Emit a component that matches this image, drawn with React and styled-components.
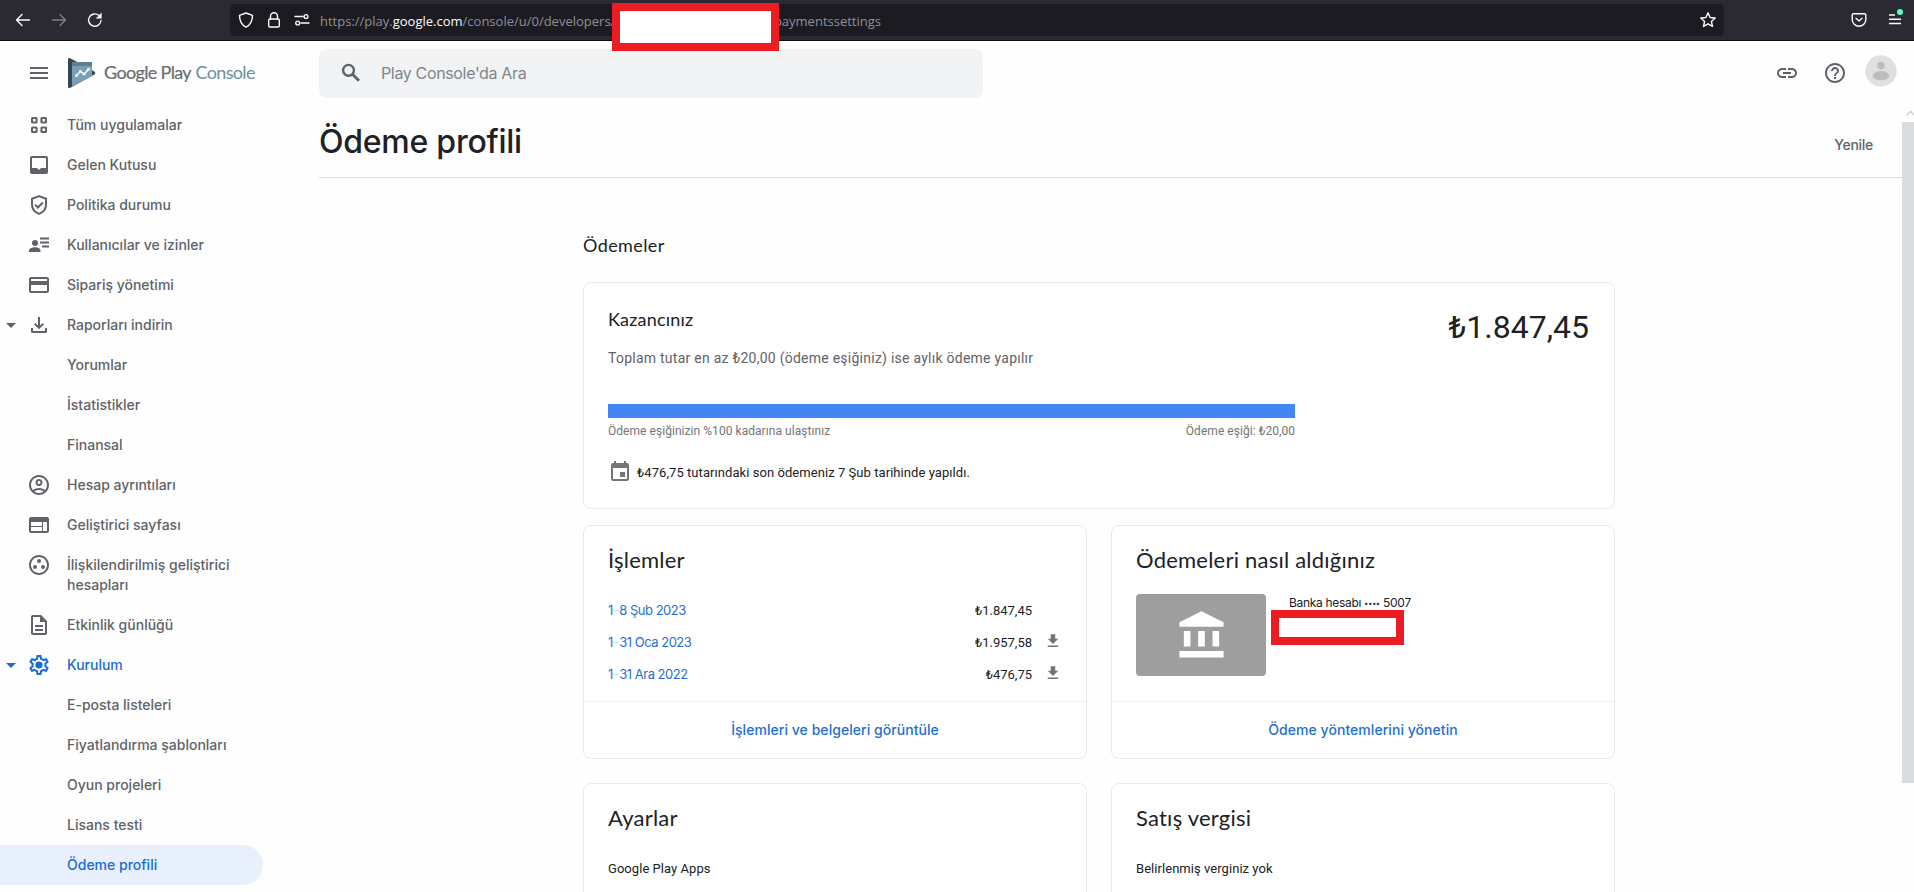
import styled, { createGlobalStyle } from "styled-components"
import {
  MdMenu, MdLink, MdHelpOutline, MdArrowDropDown, MdAccountBalance, MdEvent,
  MdFileDownload, MdOutlineGroupWork, MdOutlineAccountCircle, MdWeb, MdOutlineDescription, MdCreditCard,
} from "react-icons/md"

const GlobalStyle = createGlobalStyle`
*{ box-sizing:border-box; }
body{
margin:0;
background:#fefefe;
color:#202124;
font-family:Inter,"Liberation Sans",sans-serif;
overflow:hidden;
}
`

const SearchIcon = () => (
  <svg width="24" height="24" viewBox="0 0 24 24" fill="none" stroke="currentColor" strokeWidth="2.400">
    <circle cx="9.500" cy="9.300" r="5.400" />
    <path d="M13.400 13.200l6.600 6.600" strokeWidth="2.800" />
  </svg>
)
const GridIcon = () => (
  <svg width="24" height="24" viewBox="0 0 24 24" fill="none" stroke="currentColor" strokeWidth="2">
    <rect x="5" y="5" width="4.600" height="4.600" rx=".6" />
    <rect x="14.400" y="5" width="4.600" height="4.600" rx=".6" />
    <rect x="5" y="14.400" width="4.600" height="4.600" rx=".6" />
    <rect x="14.400" y="14.400" width="4.600" height="4.600" rx=".6" />
  </svg>
)
const InboxIcon = () => (
  <svg width="24" height="24" viewBox="0 0 24 24" fill="currentColor">
    <path d="M19 3H5a2 2 0 0 0-2 2v14c0 1.100.9 2 2 2h14a2 2 0 0 0 2-2V5a2 2 0 0 0-2-2zm0 12h-5l-2 2-2-2H5V5h14v10z" />
  </svg>
)
const ShieldIcon = () => (
  <svg width="24" height="24" viewBox="0 0 24 24" fill="none" stroke="currentColor" strokeWidth="2">
    <path d="M12 3.100 5 5.800v5.400c0 4.500 2.800 8 7 9.700 4.200-1.700 7-5.200 7-9.700V5.800z" />
    <path d="m8 11.600 2.900 2.900 5-5" />
  </svg>
)
const UsersIcon = () => (
  <svg width="24" height="24" viewBox="0 0 24 24" fill="currentColor">
    <circle cx="8" cy="10" r="3" />
    <path d="M2 19v-1.500C2 15.300 5.500 14.300 8 14.300s5.500 1 5.500 3.200V19zM13 4.500h9v2h-9zM13 8.500h9v2h-9zM15 12.500h7v2h-7z" />
  </svg>
)
const TrayIcon = () => (
  <svg width="24" height="24" viewBox="0 0 24 24" fill="none" stroke="currentColor" strokeWidth="2">
    <path d="M12 4v10.500M7.700 10.600l4.300 4.300 4.300-4.300M5 15v3.500c0 .3.200.5.500.5h13c.3 0 .5-.2.500-.5V15" />
  </svg>
)
const GearIcon = () => (
  <svg width="24" height="24" viewBox="0 0 24 24" fill="currentColor">
    <path d="M19.430 12.980c.04-.32.070-.64.070-.98 0-.34-.03-.66-.07-.98l2.110-1.650c.19-.15.240-.42.120-.64l-2-3.460a.5.5 0 0 0-.61-.22l-2.490 1c-.52-.4-1.080-.73-1.690-.98l-.38-2.650A.488.488 0 0 0 14 2h-4c-.25 0-.46.180-.49.420l-.38 2.650c-.61.250-1.170.590-1.690.980l-2.490-1a.5.5 0 0 0-.61.220l-2 3.460c-.13.220-.07.490.120.640l2.110 1.650c-.04.320-.07.650-.07.980s.03.660.070.980l-2.110 1.650c-.19.150-.24.420-.12.640l2 3.460a.5.5 0 0 0 .61.220l2.490-1c.52.400 1.080.730 1.690.980l.38 2.650c.03.240.240.420.490.420h4c.25 0 .46-.18.490-.42l.38-2.650c.61-.25 1.170-.59 1.690-.98l2.490 1a.5.5 0 0 0 .61-.22l2-3.460c.12-.22.070-.49-.12-.64l-2.110-1.650zm-1.980-1.710c.04.310.050.520.050.730s-.02.430-.05.730l-.14 1.130.89.700 1.080.840-.7 1.210-1.270-.51-1.040-.42-.9.680c-.43.320-.84.560-1.250.730l-1.060.430-.16 1.130-.2 1.350h-1.400l-.19-1.350-.16-1.130-1.060-.43c-.43-.18-.83-.41-1.230-.71l-.91-.7-1.060.430-1.270.510-.7-1.210 1.080-.84.890-.7-.14-1.130c-.03-.31-.05-.54-.05-.74s.02-.43.050-.73l.14-1.130-.89-.7-1.080-.84.700-1.210 1.270.510 1.040.420.900-.68c.43-.32.840-.56 1.250-.73l1.060-.43.160-1.130.2-1.350h1.390l.19 1.350.160 1.130 1.060.430c.43.180.830.410 1.230.710l.91.700 1.060-.43 1.270-.51.700 1.210-1.070.85-.89.700.14 1.130z" />
    <circle cx="12" cy="12" r="3.600" />
  </svg>
)
const PlayLogo = () => (
  <svg width="28" height="32" viewBox="0 0 28 32">
    <path d="M0 2.500C0 1 1.200.6 2.300 1.200L26.300 14.500c1.200.7 1.200 2.300 0 3L2.300 30.800C1.200 31.400 0 31 0 29.500z" fill="#37474f" />
    <path d="M4 5h20v14.200L4 29.300z" fill="#78a0b4" />
    <path d="M4 5h20v4H4z" fill="#5b8091" />
    <path d="M8.500 18.500l4-4 3.500 2.700 4.500-5" fill="none" stroke="#fff" strokeWidth="1.500" />
    <g fill="#fff"><circle cx="8.500" cy="18.500" r="1.500" /><circle cx="12.500" cy="14.500" r="1.400" /><circle cx="16" cy="17.200" r="1.400" /><circle cx="20.500" cy="12.200" r="1.500" /></g>
  </svg>
)
const Line = ({ w = 16, children }) => (
  <svg width={w} height="16" viewBox={`0 0 ${w} 16`} fill="none" stroke="currentColor" strokeWidth="1.400" strokeLinecap="round" strokeLinejoin="round">{children}</svg>
)

const nav = [
  { text: "Tüm uygulamalar", icon: <GridIcon /> },
  { text: "Gelen Kutusu", icon: <InboxIcon /> },
  { text: "Politika durumu", icon: <ShieldIcon /> },
  { text: "Kullanıcılar ve izinler", icon: <UsersIcon /> },
  { text: "Sipariş yönetimi", icon: <MdCreditCard /> },
  { text: "Raporları indirin", icon: <TrayIcon />, open: true },
  { text: "Yorumlar" },
  { text: "İstatistikler" },
  { text: "Finansal" },
  { text: "Hesap ayrıntıları", icon: <MdOutlineAccountCircle /> },
  { text: "Geliştirici sayfası", icon: <MdWeb /> },
  { text: "İlişkilendirilmiş geliştirici hesapları", icon: <MdOutlineGroupWork /> },
  { text: "Etkinlik günlüğü", icon: <MdOutlineDescription /> },
  { text: "Kurulum", icon: <GearIcon />, open: true, blue: true },
  { text: "E-posta listeleri" },
  { text: "Fiyatlandırma şablonları" },
  { text: "Oyun projeleri" },
  { text: "Lisans testi" },
  { text: "Ödeme profili", active: true, blue: true },
]

const transactions = [
  { from: "1", to: "8 Şub 2023", amount: "₺1.847,45" },
  { from: "1", to: "31 Oca 2023", amount: "₺1.957,58", file: true },
  { from: "1", to: "31 Ara 2022", amount: "₺476,75", file: true },
]

function BrowserBar() {
  return (
    <Browser>
      <BrowserButtons>
        <Line><path d="M14.500 8H2M7 2.500 1.500 8 7 13.500" /></Line>
        <Dim><Line><path d="M1.500 8H14M9 2.500 14.500 8 9 13.500" /></Line></Dim>
        <Line><path d="M14 8.500a6.200 6.200 0 1 1-2-5" /><path d="M14.300 1.500v4.700H9.600z" fill="currentColor" strokeWidth=".6" /></Line>
      </BrowserButtons>
      <UrlBar>
        <UrlIcons>
          <Line><path d="M8 1 14.500 3.300C14.500 9 12.500 13 8 15.200 3.500 13 1.500 9 1.500 3.300z" /></Line>
          <Line><rect x="2.700" y="7" width="10.600" height="8" rx="1.200" /><path d="M4.500 7V4.200a3.500 3.500 0 0 1 7 0V7" /></Line>
          <Line><path d="M1 4.500h8M7 11h8" /><circle cx="12" cy="4.500" r="1.900" /><circle cx="3.700" cy="11" r="1.900" /></Line>
        </UrlIcons>
        <Url>
          https://play.<b>google.com</b>/console/u/0/developers/
          <UrlEnd>paymentssettings</UrlEnd>
        </Url>
        <Line><path d="m8 .8 2.100 4.700 5.100.5-3.800 3.400 1.100 5L8 11.800l-4.500 2.600 1.100-5L.8 6l5.100-.5z" /></Line>
      </UrlBar>
      <BrowserEnd>
        <Line><path d="M1.200 3c0-.8.5-1.300 1.300-1.300h11c.8 0 1.300.5 1.300 1.300v4.500a6.800 6.800 0 0 1-13.600 0z" /><path d="M5 6.200l3 2.900 3-2.900" /></Line>
        <MenuButton>
          <Line w={14}><path d="M1.500 3h5M1.500 7.200h11M1.500 11.500h11" /></Line>
        </MenuButton>
      </BrowserEnd>
      <UrlCover />
    </Browser>
  )
}

function NavItem({ text, icon, open, blue, active }) {
  return (
    <NavRow $blue={blue} $active={active}>
      <Caret>{open && <MdArrowDropDown />}</Caret>
      <NavIcon>{icon}</NavIcon>
      <NavText>{text}</NavText>
    </NavRow>
  )
}

export default function App() {
  return (
    <Page>
      <GlobalStyle />
      <BrowserBar />
      <Header>
        <Brand>
          <MdMenu />
          <PlayLogo />
          <BrandName>Google Play <span>Console</span></BrandName>
        </Brand>
        <Search><SearchIcon />Play Console'da Ara</Search>
        <HeaderActions>
          <MdLink />
          <MdHelpOutline />
          <Avatar>
            <svg width="32" height="32" viewBox="0 0 32 32">
              <circle cx="16" cy="16" r="15.700" fill="#e0e0e0" />
              <circle cx="16" cy="10.600" r="3.800" fill="#bdbdbd" />
              <ellipse cx="16" cy="20.700" rx="8.200" ry="4.600" fill="#bdbdbd" />
            </svg>
          </Avatar>
        </HeaderActions>
      </Header>
      <Body>
        <Sidebar>{nav.map(item => <NavItem key={item.text} {...item} />)}</Sidebar>
        <Main>
          <TitleBar>
            <h1>Ödeme profili</h1>
            <Refresh>Yenile</Refresh>
          </TitleBar>
          <Content>
            <SectionTitle>Ödemeler</SectionTitle>
            <Earnings>
              <EarningsTop>
                <div>
                  <EarningsTitle>Kazancınız</EarningsTitle>
                  <EarningsText>Toplam tutar en az ₺20,00 (ödeme eşiğiniz) ise aylık ödeme yapılır</EarningsText>
                </div>
                <Total>₺1.847,45</Total>
              </EarningsTop>
              <Progress />
              <ProgressLabels>
                <span>Ödeme eşiğinizin %100 kadarına ulaştınız</span>
                <span>Ödeme eşiği: ₺20,00</span>
              </ProgressLabels>
              <LastPayment><MdEvent />₺476,75 tutarındaki son ödemeniz 7 Şub tarihinde yapıldı.</LastPayment>
            </Earnings>
            <Cards>
              <Card>
                <CardBody>
                  <CardTitle>İşlemler</CardTitle>
                  <Transactions>
                    {transactions.map(t => (
                      <Transaction key={t.to}>
                        <Period>{t.from}<Dash>–</Dash>{t.to}</Period>
                        <Amount>{t.amount}</Amount>
                        <FileSlot>{t.file && <MdFileDownload />}</FileSlot>
                      </Transaction>
                    ))}
                  </Transactions>
                </CardBody>
                <CardLink>İşlemleri ve belgeleri görüntüle</CardLink>
              </Card>
              <Card>
                <CardBody>
                  <CardTitle>Ödemeleri nasıl aldığınız</CardTitle>
                  <Method>
                    <BankImage><MdAccountBalance /></BankImage>
                    <Account>Banka hesabı <Dots>••••</Dots> 5007</Account>
                    <AccountCover />
                  </Method>
                </CardBody>
                <CardLink>Ödeme yöntemlerini yönetin</CardLink>
              </Card>
              <Card>
                <CardBody>
                  <CardTitle>Ayarlar</CardTitle>
                  <CardText>Google Play Apps</CardText>
                </CardBody>
              </Card>
              <Card>
                <CardBody>
                  <CardTitle>Satış vergisi</CardTitle>
                  <CardText>Belirlenmiş verginiz yok</CardText>
                </CardBody>
              </Card>
            </Cards>
          </Content>
        </Main>
        <Scrollbar>
          <svg width="12" height="17" viewBox="0 0 12 17" fill="none" stroke="#d3d4d7" strokeWidth="1.600"><path d="m4.500 10.500 4-4 4 4" /></svg>
          <Thumb />
        </Scrollbar>
      </Body>
    </Page>
  )
}

const Page = styled.div`
height:892px;
display:flex;
flex-direction:column;
overflow:hidden;
`
const Browser = styled.div`
position:relative;
height:41px;
flex:none;
display:flex;
align-items:center;
background:#2b2a33;
border-bottom:1px solid #0c0c0d;
color:#fbfbfe;
svg{ display:block; }
`
const BrowserButtons = styled.div`
width:230px;
padding-left:15px;
display:flex;
gap:20px;
`
const Dim = styled.span`
opacity:.4;
`
const UrlBar = styled.div`
width:1494px;
height:32px;
padding:0 8px;
display:flex;
align-items:center;
background:#1c1b22;
border-radius:4px;
svg:last-child{ margin-left:auto; }
`
const UrlIcons = styled.div`
width:82px;
display:flex;
gap:12px;
svg:last-child{ margin-left:0; }
`
const Url = styled.div`
width:561px;
margin-top:2px;
display:flex;
font:13px/20px "Open Sans",sans-serif;
color:#8f8f96;
white-space:nowrap;
b{ font-weight:400; color:#fbfbfe; }
`
const UrlEnd = styled.span`
margin-left:auto;
`
const BrowserEnd = styled.div`
margin-left:127px;
display:flex;
align-items:center;
gap:21px;
`
const MenuButton = styled.div`
position:relative;
&::after{
content:"";
position:absolute;
top:-3px;
right:-1px;
width:6px;
height:6px;
border-radius:50%;
background:#54ffbd;
}
`
const Cover = styled.div`
position:absolute;
background:#fff;
border:8px solid #ed1c24;
`
const UrlCover = styled(Cover)`
left:612px;
top:3px;
width:167px;
height:48px;
z-index:2;
`
const Header = styled.header`
height:64px;
flex:none;
display:flex;
align-items:center;
color:#5f6368;
`
const Brand = styled.div`
width:319px;
padding-left:27px;
display:flex;
align-items:center;
>svg:first-child{ font-size:24px; margin-right:17px; }
`
const BrandName = styled.div`
margin:-2px 0 0 8px;
font:18px/24px Lato,sans-serif;
letter-spacing:-.65px;
color:#6a6c6f;
-webkit-text-stroke:.2px;
span{ color:#6f8f9c; -webkit-text-stroke:0; margin-left:1px; }
`
const Search = styled.div`
width:664px;
height:49px;
padding-left:20px;
display:flex;
align-items:center;
gap:18px;
background:#f1f3f4;
border-radius:8px;
color:#80868b;
font-size:16px;
letter-spacing:-.35px;
svg{ color:#5f6368; }
`
const HeaderActions = styled.div`
margin-left:auto;
padding-right:17px;
display:flex;
align-items:center;
gap:24px;
font-size:24px;
`
const Avatar = styled.div`
height:32px;
margin:-4px 0 0 -6px;
svg{ display:block; }
`
const Body = styled.div`
flex:1;
display:flex;
min-height:0;
`
const Sidebar = styled.nav`
width:319px;
flex:none;
`
const NavRow = styled.div`
width:263px;
display:flex;
padding:10px 0;
font-size:14px;
font-weight:530;
line-height:20px;
color:${props => props.$blue ? "#1a6bd6" : "#5f6368"};
background:${props => props.$active ? "#e8f0fe" : "none"};
border-radius:0 20px 20px 0;
svg{ display:block; margin:-2px 0; font-size:24px; }
`
const Caret = styled.div`
width:24px;
margin-left:-1px;
`
const NavIcon = styled.div`
width:24px;
margin-left:4px;
`
const NavText = styled.div`
flex:1;
margin-left:16px;
`
const Main = styled.main`
flex:1;
min-width:0;
`
const TitleBar = styled.div`
height:73px;
display:flex;
justify-content:space-between;
border-bottom:1px solid #dadce0;
h1{
margin:0;
font-size:32px;
font-weight:520;
line-height:73px;
letter-spacing:-.25px;
}
`
const Refresh = styled.div`
padding:8px 29px 0 0;
font-size:14px;
font-weight:530;
line-height:64px;
letter-spacing:-.3px;
color:#5f6368;
`
const Content = styled.div`
width:1032px;
margin-left:264px;
padding-top:55px;
`
const SectionTitle = styled.h2`
margin:0 0 25px;
font:18px/24px Lato,sans-serif;
letter-spacing:.4px;
`
const Card = styled.section`
display:flex;
flex-direction:column;
border:1px solid #e8eaed;
border-radius:8px;
background:#fff;
`
const Earnings = styled(Card)`
height:227px;
padding:24px 25px 0 24px;
margin-bottom:16px;
font-family:Roboto,sans-serif;
`
const EarningsTop = styled.div`
display:flex;
justify-content:space-between;
`
const EarningsTitle = styled.h3`
margin:0 0 17px;
font:18px/24px Lato,sans-serif;
letter-spacing:.2px;
`
const EarningsText = styled.div`
font-size:14px;
line-height:20px;
letter-spacing:.25px;
color:#5f6368;
`
const Total = styled.div`
font-size:32px;
line-height:40px;
`
const Progress = styled.div`
width:687px;
height:14px;
margin-top:36px;
background:#4285f4;
`
const ProgressLabels = styled.div`
width:687px;
margin-top:5px;
display:flex;
justify-content:space-between;
font-size:12px;
line-height:16px;
letter-spacing:.05px;
color:#757575;
`
const LastPayment = styled.div`
margin-top:21px;
display:flex;
align-items:center;
font-size:13px;
letter-spacing:.06px;
svg{ font-size:24px; margin-right:5px; color:#757575; }
`
const Cards = styled.div`
display:grid;
grid-template-columns:1fr 1fr;
grid-template-rows:234px 234px;
gap:24px;
`
const CardBody = styled.div`
flex:1;
padding:20px 24px 0;
`
const CardTitle = styled.h3`
margin:0;
font:22px/28px Lato,sans-serif;
letter-spacing:.22px;
`
const Transactions = styled.div`
margin-top:20px;
`
const Transaction = styled.div`
height:32px;
display:flex;
align-items:center;
font-size:13px;
`
const Period = styled.a`
flex:1;
color:#1f6fd1;
letter-spacing:-.5px;
`
const Dash = styled.span`
opacity:.25;
margin-right:.5px;
`
const Amount = styled.div`
margin-right:1px;
font-family:Roboto,sans-serif;
`
const FileSlot = styled.div`
width:29px;
padding-left:11px;
margin-top:-2px;
svg{ display:block; font-size:18px; color:#757575; }
`
const CardLink = styled.a`
height:57px;
border-top:1px solid #eeeff1;
font-size:14px;
font-weight:540;
line-height:55px;
text-align:center;
color:#1f6fd1;
letter-spacing:.05px;
`
const Method = styled.div`
position:relative;
margin-top:20px;
display:flex;
`
const BankImage = styled.div`
width:130px;
height:82px;
display:flex;
align-items:center;
justify-content:center;
background:#9e9e9e;
border-radius:4px;
color:#fff;
font-size:53px;
`
const Account = styled.div`
margin-left:23px;
font-size:12px;
line-height:18px;
letter-spacing:-.3px;
`
const Dots = styled.span`
font-size:7px;
letter-spacing:0;
vertical-align:1px;
`
const AccountCover = styled(Cover)`
left:135px;
top:16px;
width:133px;
height:35px;
`
const CardText = styled.div`
margin-top:27px;
font:13px/20px Roboto,sans-serif;
letter-spacing:.05px;
`
const Scrollbar = styled.div`
width:12px;
flex:none;
svg{ display:block; }
`
const Thumb = styled.div`
height:661px;
background:#dadce0;
`
